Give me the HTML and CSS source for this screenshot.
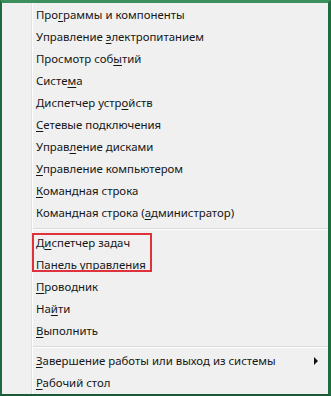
FILE: index.html
```html
<!DOCTYPE html>
<html lang="ru">
  <head>
    <meta charset="UTF-8" />
    <title>Меню Win+X</title>
    <link rel="stylesheet" href="styles.css">
  </head>
  <body>
    <div class="frame">
      <div class="gutter"></div>
      <ul class="menu">
        <li class="item">Про<u>г</u>раммы и компоненты</li>
        <li class="item">Управление <u>э</u>лектропитанием</li>
        <li class="item">Просмотр соб<u>ы</u>тий</li>
        <li class="item">Систе<u>м</u>а</li>
        <li class="item">Диспетчер устр<u>о</u>йств</li>
        <li class="item"><u>С</u>етевые подключения</li>
        <li class="item">Управ<u>л</u>ение дисками</li>
        <li class="item"><u>У</u>правление компьютером</li>
        <li class="item"><u>К</u>омандная строка</li>
        <li class="item">Командная строка (<u>а</u>дминистратор)</li>
        <li class="sep"></li>
        <li class="item">Д<u>и</u>спетчер задач</li>
        <li class="item">Панел<u>ь</u> управления</li>
        <li class="item"><u>П</u>роводник</li>
        <li class="item">На<u>й</u>ти</li>
        <li class="item"><u>В</u>ыполнить</li>
        <li class="sep"></li>
        <li class="item has-sub"><span><u>З</u>авершение работы или выход из системы</span><span class="arrow"></span></li>
        <li class="item"><u>Р</u>абочий стол</li>
      </ul>
      <div class="mark"></div>
    </div>
  </body>
</html>
```
FILE: styles.css
```css
html, body {
    margin: 0;
    height: 396px;
    overflow: hidden;
    background: #2d7d4f;
}

.frame {
    position: relative;
    display: flex;
    height: 391px;
    border-top: 3px solid #3a8f5d;
    border-left: 2px solid #1f6b40;
    border-right: 3px solid #1f6b40;
    border-bottom: 2px solid #1a5a36;
    background: #f0f0f0;
}

.gutter {
    width: 29px;
    flex: none;
    border-right: 1px solid #e2e2e2;
    box-shadow: 1px 0 0 #ffffff;
}

.menu {
    list-style: none;
    margin: 0;
    padding: 1px 0 0 1px;
    flex: 1;
    font-family: "Noto Sans", "Open Sans", sans-serif;
    font-size: 11.4px;
    color: #161616;
}

.item {
    height: 22px;
    line-height: 22px;
    padding-left: 3px;
    white-space: nowrap;
}

.item u {
    text-decoration-thickness: 1px;
    text-underline-offset: 2px;
}

.has-sub {
    display: flex;
    justify-content: space-between;
    align-items: center;
    padding-right: 10px;
}

.arrow {
    width: 0;
    height: 0;
    border-top: 4px solid transparent;
    border-bottom: 4px solid transparent;
    border-left: 4px solid #111111;
}

.sep {
    height: 1px;
    margin: 4px 0 2px 0;
    background: #d9d9d9;
    border-bottom: 1px solid #ffffff;
}

.mark {
    position: absolute;
    left: 30px;
    top: 230px;
    width: 116px;
    height: 35px;
    border: 2px solid #e0323c;
}
```
